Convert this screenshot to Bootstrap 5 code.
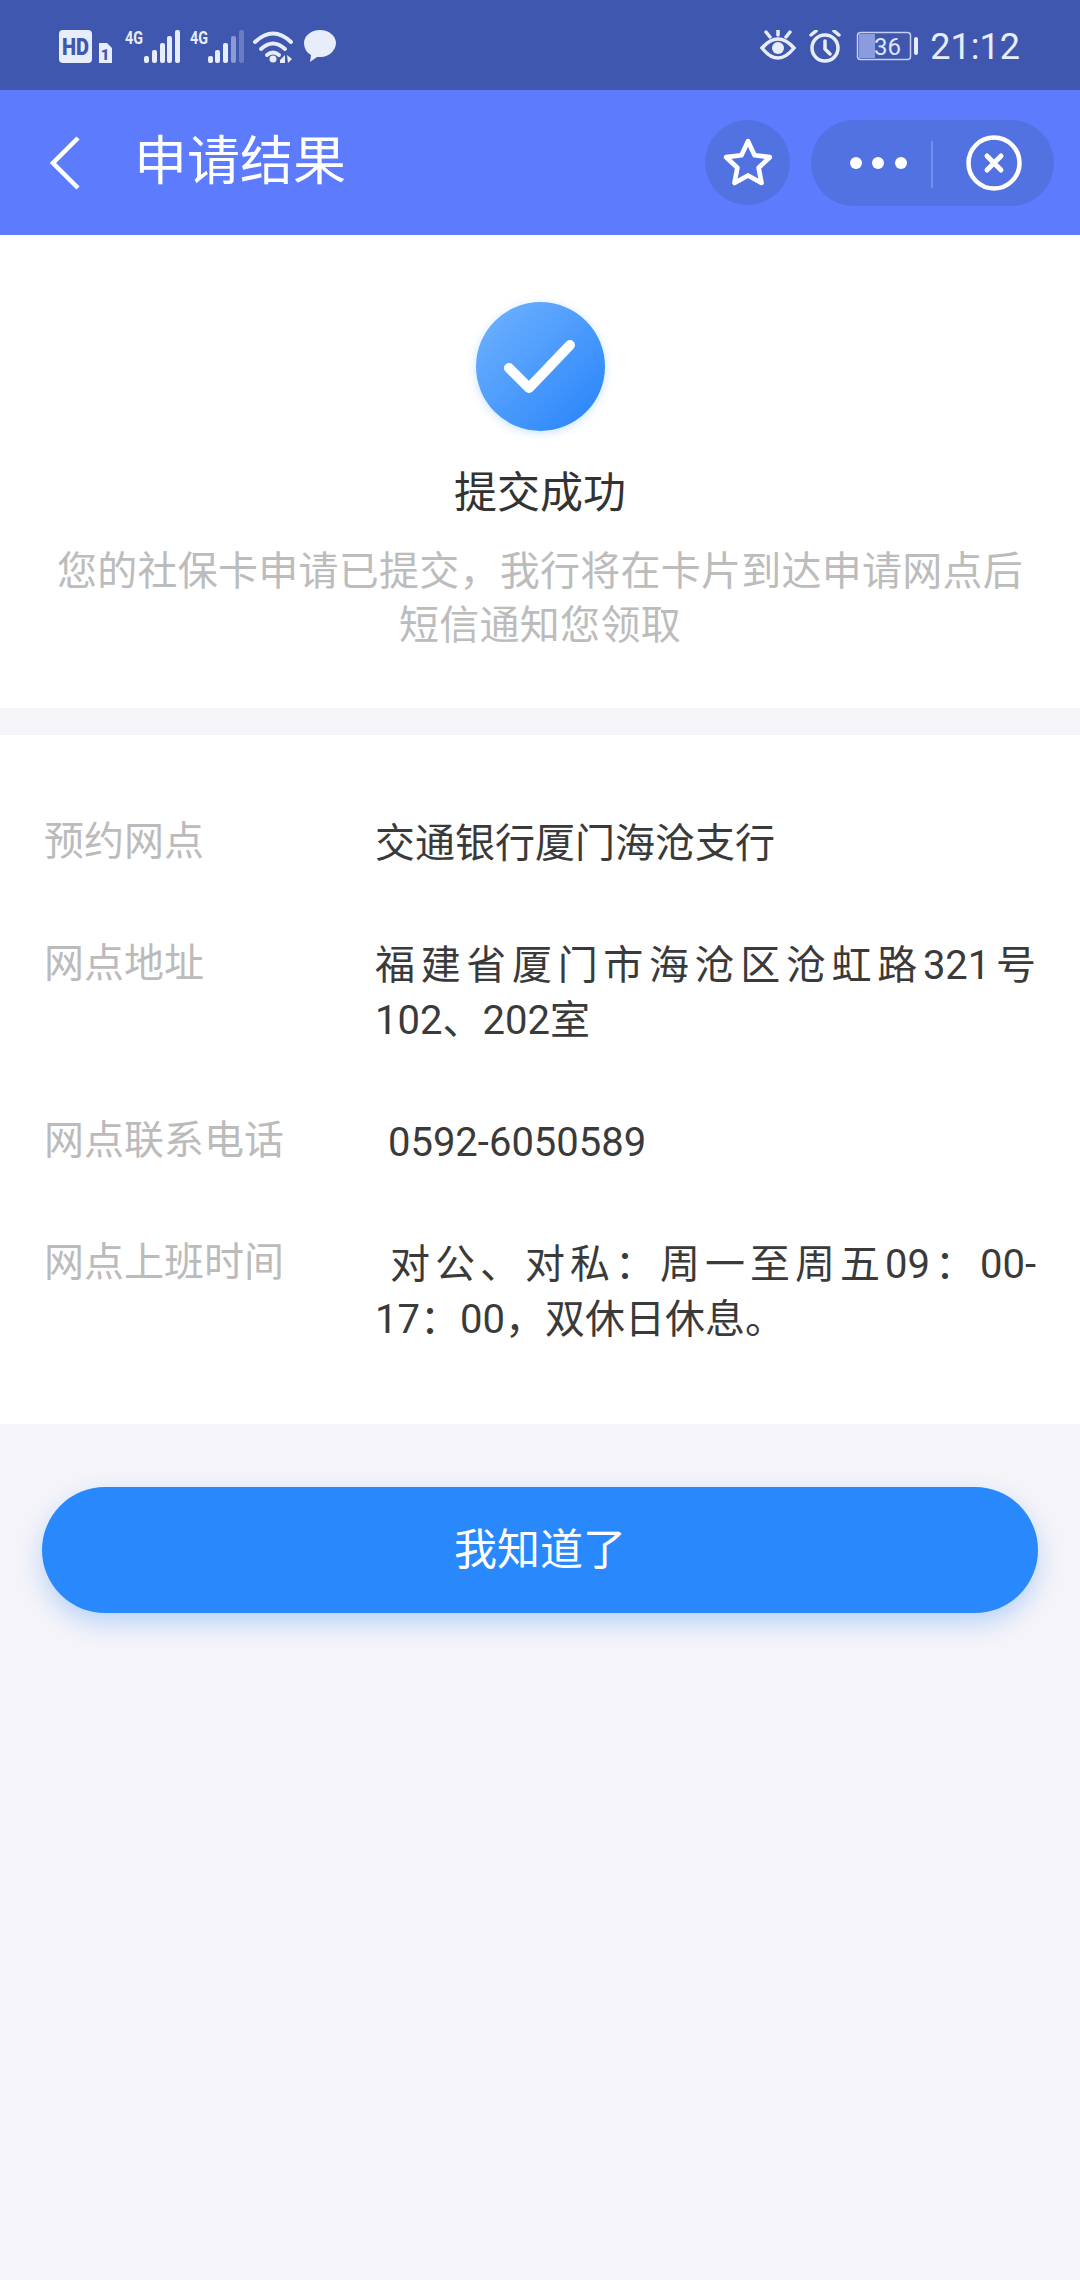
<!DOCTYPE html>
<html lang="zh-CN">
<head>
    <meta charset="UTF-8">
    <meta name="viewport" content="width=device-width, initial-scale=1.0">
    <title>申请结果</title>
    <link href="https://cdn.jsdelivr.net/npm/bootstrap@5.3.3/dist/css/bootstrap.min.css" rel="stylesheet">
    <style>
        body {
            font-family: Roboto, "Noto Sans CJK SC", sans-serif;
            background-color: #f5f4f9;
            color: #333;
            min-height: 2280px;
        }

        /* Status bar */
        .status-bar {
            height: 90px;
            background-color: #3f57ae;
            color: #e8edfb;
            padding: 3px 60px 0 59px;
        }

        .status-time {
            font-size: 36px;
            line-height: 1;
            margin-left: 12px;
        }

        /* Title bar */
        .title-bar {
            height: 145px;
            background-color: #5c7bfd;
            color: #fff;
            padding: 0 26px 0 50px;
        }

        .title-text {
            font-size: 53px;
            line-height: 1;
            margin: 0 0 0 54px;
            font-weight: 400;
        }

        .round-btn {
            width: 85px;
            height: 85px;
            background-color: #5272e2;
            border-radius: 50%;
            margin-right: 21px;
        }

        .capsule-btn {
            width: 243px;
            height: 86px;
            background-color: #5272e2;
            border-radius: 43px;
        }

        /* Result block */
        .result-box {
            background-color: #fff;
            padding: 67px 40px 55px;
            text-align: center;
        }

        .check-circle {
            width: 129px;
            height: 129px;
            border-radius: 50%;
            background: linear-gradient(135deg, #72b3ff, #2583fa);
            box-shadow: 0 2px 10px rgba(80, 160, 255, .3);
            margin: 0 auto;
        }

        .result-title {
            font-size: 43px;
            line-height: 46px;
            font-weight: 400;
            color: #333;
            margin: 39px 0 29px;
        }

        .result-desc {
            font-size: 40px;
            line-height: 54px;
            letter-spacing: .26px;
            color: #bcbcbc;
        }

        /* Detail rows */
        .detail-box {
            background-color: #fff;
            margin-top: 27px;
            padding: 81px 44px 77px;
        }

        .detail-row {
            font-size: 40px;
            line-height: 55px;
            margin-bottom: 67px;
        }

        .detail-row:last-child {
            margin-bottom: 0;
        }

        .detail-label {
            width: 331px;
            flex-shrink: 0;
            color: #bbb;
            margin-top: -2px;
        }

        .detail-value {
            width: 661px;
            text-align: justify;
            color: #3a3a3a;
        }

        .phone-value {
            padding-left: 3px;
        }

        /* Button */
        .ok-btn {
            display: block;
            width: 996px;
            height: 126px;
            margin: 63px 0 0 42px;
            border: none;
            border-radius: 63px;
            background-color: #2a88fd;
            color: #fff;
            font-size: 43px;
            box-shadow: 0 10px 24px rgba(42, 136, 253, .3);
        }
    </style>
</head>
<body>
    <!-- Status bar -->
    <div class="status-bar d-flex align-items-center justify-content-between">
        <svg width="277" height="44" viewBox="0 -5 277 44">
            <rect x="0" y="0" width="33" height="33" rx="4" fill="#e8edfb"/>
            <text x="3" y="25" font-family="Roboto" font-size="23" font-weight="900" fill="#3f57ae" textLength="27" lengthAdjust="spacingAndGlyphs">HD</text>
            <path d="M40 13h8l5 5v15H40z" fill="#e8edfb"/>
            <text x="46" y="30" font-family="Roboto" font-size="15" font-weight="900" text-anchor="middle" fill="#3f57ae">1</text>
            <text x="66" y="14" font-family="Roboto" font-size="19" font-weight="700" fill="#e8edfb" textLength="18" lengthAdjust="spacingAndGlyphs">4G</text>
            <g fill="#e8edfb">
                <rect x="85" y="26" width="5" height="7" rx="2"/><rect x="93" y="20" width="5" height="13" rx="2"/>
                <rect x="101" y="13" width="5" height="20" rx="2"/><rect x="108" y="6" width="5" height="27" rx="2"/>
                <rect x="116" y="0" width="5" height="33" rx="2"/>
            </g>
            <text x="131" y="14" font-family="Roboto" font-size="19" font-weight="700" fill="#e8edfb" textLength="18" lengthAdjust="spacingAndGlyphs">4G</text>
            <g fill="#e8edfb">
                <rect x="149" y="26" width="5" height="7" rx="2"/><rect x="156" y="20" width="5" height="13" rx="2"/>
                <rect x="164" y="13" width="5" height="20" rx="2"/>
                <rect x="172" y="6" width="5" height="27" rx="2" opacity=".45"/>
                <rect x="180" y="0" width="5" height="33" rx="2" opacity=".25"/>
            </g>
            <g fill="none" stroke="#e8edfb" stroke-width="4" stroke-linecap="round">
                <path d="M196 12Q214-5 232 12"/><path d="M202 19Q214 8 226 19"/><path d="M208 25Q214 20 220 25"/>
            </g>
            <circle cx="214" cy="29" r="3.500" fill="#e8edfb"/>
            <path d="M221 30l5-5v8h-5zM228 25l5 4-4 4z" fill="#e8edfb"/>
            <path d="M261 0c9 0 16 6 16 13s-7 14-15 14c-2 0-3 0-4 0l-7 5 1-7c-4-2-7-7-7-12C245 6 252 0 261 0z" fill="#e8edfb"/>
        </svg>
        <div class="d-flex align-items-center">
            <svg width="158" height="34" viewBox="0 0 158 34">
                <g fill="none" stroke="#e8edfb" stroke-width="3.500" stroke-linecap="round">
                    <path d="M2 18Q18 0 34 18Q18 38 2 18z"/><path d="M18 0v5M6 2l4 5M30 2l-4 5"/>
                </g>
                <circle cx="18" cy="18" r="6" fill="#e8edfb"/>
                <g fill="none" stroke="#e8edfb" stroke-width="3.500" stroke-linecap="round">
                    <circle cx="65" cy="18" r="13"/><path d="M65 11v8l5 5M51 5l5-4M79 5l-5-4"/>
                </g>
                <rect x="97.500" y="2.500" width="53" height="27" rx="3" fill="none" stroke="#c5cff0" stroke-width="1.500"/>
                <rect x="99" y="4" width="16" height="24" fill="#8b9be0"/>
                <text x="114" y="24.500" font-family="Roboto" font-size="24" fill="#dfe5fa" textLength="27" lengthAdjust="spacingAndGlyphs">36</text>
                <rect x="154" y="7" width="4" height="18" rx="2" fill="#e8edfb"/>
            </svg>
            <span class="status-time">21:12</span>
        </div>
    </div>

    <!-- Title bar -->
    <div class="title-bar d-flex align-items-center">
        <svg width="30" height="54" viewBox="0 0 30 54">
            <path d="M28 2L3 27l25 25" fill="none" stroke="#fff" stroke-width="4.500"/>
        </svg>
        <h1 class="title-text flex-grow-1">申请结果</h1>
        <div class="round-btn d-flex align-items-center justify-content-center">
            <svg width="52" height="52" viewBox="0 0 50 50">
                <path d="M25 4l6.300 13.500 14.700 1.900-10.800 10.200 2.800 14.600L25 37l-13 7.200 2.800-14.600L4 19.400l14.700-1.900z" fill="none" stroke="#fff" stroke-width="4.500" stroke-linejoin="round"/>
            </svg>
        </div>
        <div class="capsule-btn d-flex align-items-center">
            <svg width="243" height="86" viewBox="0 0 243 86">
                <g fill="#fff">
                    <circle cx="45" cy="43" r="6"/><circle cx="67" cy="43" r="6"/><circle cx="90" cy="43" r="6"/>
                </g>
                <path d="M121 21v47" stroke="#7f99ee" stroke-width="1.500"/>
                <circle cx="183" cy="43" r="25.500" fill="none" stroke="#fff" stroke-width="4.500"/>
                <path d="M176 36l14 14M190 36l-14 14" stroke="#fff" stroke-width="5" stroke-linecap="round"/>
            </svg>
        </div>
    </div>

    <!-- Result -->
    <div class="result-box">
        <div class="check-circle d-flex align-items-center justify-content-center">
            <svg width="76" height="60" viewBox="0 0 76 60">
                <path d="M7 31l20 20L68 8" fill="none" stroke="#fff" stroke-width="10" stroke-linecap="round" stroke-linejoin="round"/>
            </svg>
        </div>
        <h2 class="result-title">提交成功</h2>
        <div class="result-desc">您的社保卡申请已提交，我行将在卡片到达申请网点后<br>短信通知您领取</div>
    </div>

    <!-- Details -->
    <div class="detail-box">
        <div class="detail-row d-flex">
            <div class="detail-label">预约网点</div>
            <div class="detail-value">交通银行厦门海沧支行</div>
        </div>
        <div class="detail-row d-flex">
            <div class="detail-label">网点地址</div>
            <div class="detail-value">福建省厦门市海沧区沧虹路321号102、202室</div>
        </div>
        <div class="detail-row d-flex">
            <div class="detail-label">网点联系电话</div>
            <div class="detail-value phone-value">&nbsp;0592-6050589</div>
        </div>
        <div class="detail-row d-flex">
            <div class="detail-label">网点上班时间</div>
            <div class="detail-value">&nbsp;对公、对私：周一至周五09：00-17：00，双休日休息。</div>
        </div>
    </div>

    <button type="button" class="ok-btn">我知道了</button>

    <script src="https://cdn.jsdelivr.net/npm/bootstrap@5.3.3/dist/js/bootstrap.bundle.min.js"></script>
</body>
</html>
